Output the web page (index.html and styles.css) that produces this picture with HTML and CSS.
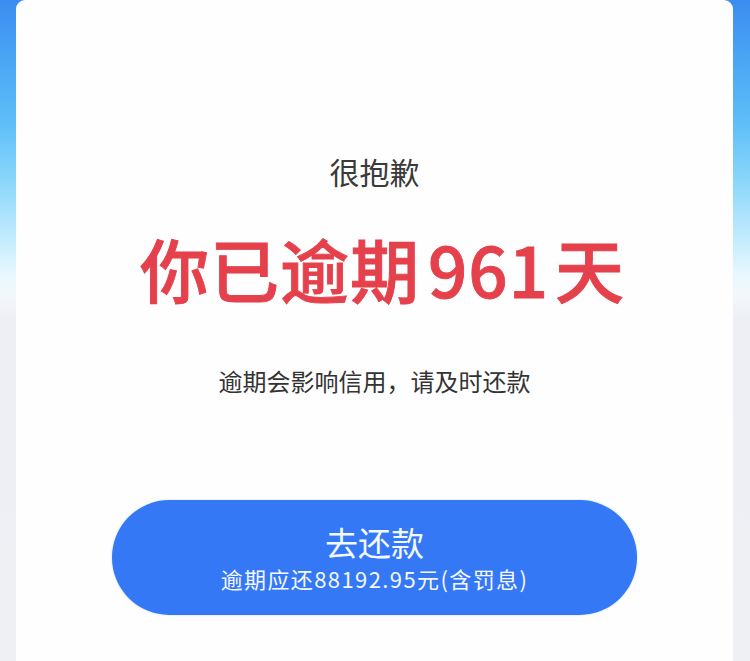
FILE: index.html
```html
<!DOCTYPE html>
<html lang="zh-CN">
<head>
<meta charset="utf-8">
<title>逾期提醒</title>
<link rel="stylesheet" href="styles.css">
</head>
<body>
<div class="page">
  <main class="card">
    <p class="sorry">很抱歉</p>
    <h1 class="overdue">你已逾期<span class="days">961</span>天</h1>
    <p class="notice">逾期会影响信用，请及时还款</p>
    <button class="repay" type="button">
      <span class="repay-title">去还款</span>
      <span class="repay-sub">逾期应还88192.95元(含罚息)</span>
    </button>
  </main>
</div>
</body>
</html>
```

FILE: styles.css
```css
html, body {
  margin: 0;
  padding: 0;
}
body {
  width: 750px;
  height: 661px;
  overflow: hidden;
  font-family: "Noto Sans CJK SC", "Noto Sans", sans-serif;
  background: linear-gradient(to bottom,
    #3b8cf0 0px,
    #4aa6f4 60px,
    #5cbdf8 120px,
    #8ad6fb 180px,
    #c4ecfd 240px,
    #e8f8fe 275px,
    #f4f7fa 295px,
    #edeff4 320px,
    #eff0f4 661px);
}
.page {
  display: flex;
  justify-content: flex-start;
  padding: 0 17px 0 16px;
  height: 661px;
}
.card {
  flex: 1;
  background: #fefefe;
  border-radius: 9px 9px 0 0;
  display: flex;
  flex-direction: column;
  align-items: center;
  padding-top: 151px;
}
.sorry {
  margin: 0;
  font-size: 30px;
  line-height: 40px;
  color: #3a3a3a;
  font-weight: 400;
}
.overdue {
  margin: 37px 0 0;
  padding-left: 16px;
  font-size: 69px;
  line-height: 80px;
  font-weight: 500;
  color: #e5414c;
  letter-spacing: 1px;
  -webkit-text-stroke: 0.9px #e5414c;
}
.days {
  margin: 0 6px 0 8px;
  letter-spacing: 1px;
}
.notice {
  margin: 57px 0 0;
  font-size: 24px;
  line-height: 32px;
  color: #333333;
}
.repay {
  margin-top: 103px;
  width: 525px;
  height: 115px;
  border: none;
  border-radius: 58px;
  background: #3478f6;
  color: #f4f8ff;
  font-family: inherit;
  display: flex;
  flex-direction: column;
  align-items: center;
  justify-content: center;
  padding: 0;
  box-shadow: 0 0 2px rgba(52, 120, 246, 0.35);
}
.repay-title {
  font-size: 33px;
  line-height: 40px;
  margin-top: 0;
}
.repay-sub {
  font-size: 22px;
  line-height: 30px;
  margin-top: 1px;
  letter-spacing: 1.4px;
}
```
